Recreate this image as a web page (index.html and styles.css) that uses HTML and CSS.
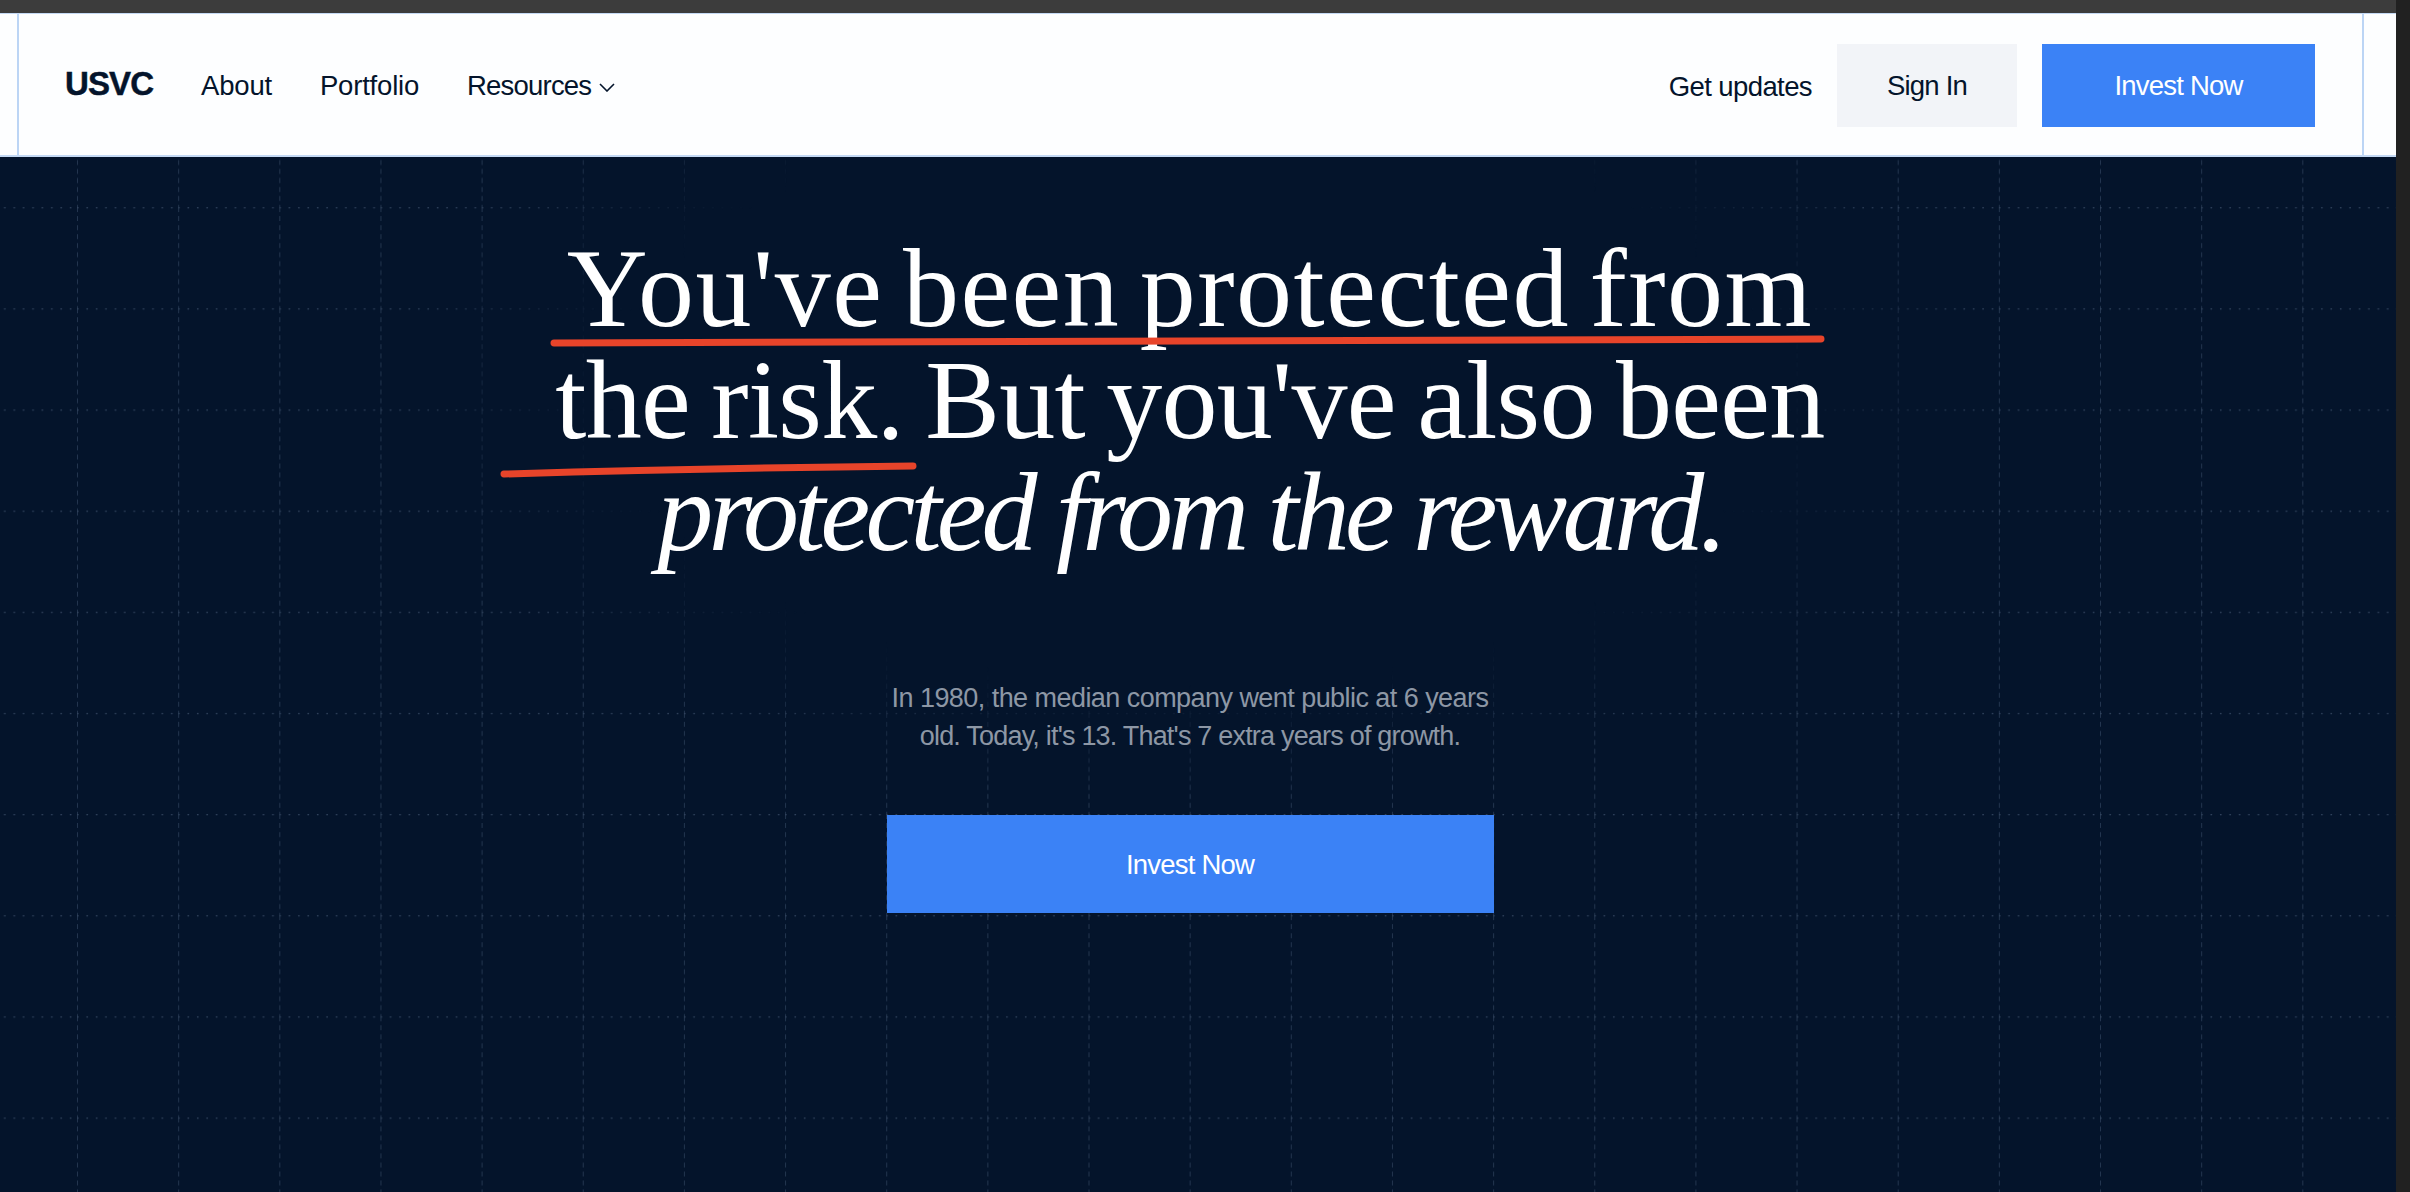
FILE: index.html
```html
<!DOCTYPE html>
<html lang="en">
<head>
<meta charset="utf-8">
<title>USVC</title>
<link rel="stylesheet" href="styles.css">
</head>
<body>
<div class="window">
  <div class="topbar"></div>
  <header class="navband">
    <nav class="nav">
      <div class="nav-left">
        <a class="logo">USVC</a>
        <a class="link">About</a>
        <a class="link">Portfolio</a>
        <a class="link link-menu">Resources
          <svg class="chev" viewBox="0 0 16 9" width="16" height="9"><path d="M1 1l7 7 7-7" fill="none" stroke="#04142b" stroke-width="1.6"/></svg>
        </a>
      </div>
      <div class="nav-right">
        <a class="link updates">Get updates</a>
        <a class="btn btn-sign">Sign In</a>
        <a class="btn btn-invest">Invest Now</a>
      </div>
    </nav>
  </header>
  <main class="hero">
    <svg class="grid" width="100%" height="100%">
      <defs>
        <pattern id="cell" x="-24.15" y="-51" width="101.15" height="101.15" patternUnits="userSpaceOnUse">
          <line x1="0.5" y1="0" x2="0.5" y2="101.15" stroke="#23354f" stroke-width="1" stroke-dasharray="5 4"/>
          <line x1="0" y1="0.5" x2="101.15" y2="0.5" stroke="#33455f" stroke-width="1.4" stroke-dasharray="1.6 7.8"/>
        </pattern>
      </defs>
      <rect width="100%" height="100%" fill="url(#cell)"/>
    </svg>
    <div class="hero-inner">
      <h1 class="headline"><span class="line line-a">You've been protected from</span><span class="line line-b">the risk. But you've also been</span><em class="line line-c">protected from the reward.</em></h1>
      <p class="lede">In 1980, the median company went public at 6 years<br><span class="lede-tight">old. Today, it's 13. That's 7 extra years of growth.</span></p>
      <a class="btn btn-invest btn-hero">Invest Now</a>
    </div>
    <svg class="marks" width="2396" height="1035" viewBox="0 0 2396 1035">
      <path d="M554 186 Q1200 184 1821 182" fill="none" stroke="#e8442a" stroke-width="7" stroke-linecap="round"/>
      <path d="M504 317 Q720 311 913 309" fill="none" stroke="#e8442a" stroke-width="7" stroke-linecap="round"/>
    </svg>
  </main>
</div>
</body>
</html>
```
FILE: styles.css
```css
* { box-sizing: border-box; }
html, body { margin: 0; height: 100%; }
body {
  background: #212121;
  overflow: hidden;
  font-family: "Liberation Sans", Arial, sans-serif;
}
.window {
  width: 2396px;
  height: 1192px;
  display: flex;
  flex-direction: column;
  background: #04142b;
}
.topbar { height: 13px; background: #3c3c3c; flex: none; }
.navband {
  flex: none;
  height: 144px;
  background: #fdfeff;
  padding: 0 32px 0 17px;
  border-top: 1px solid #c4d9f4;
  border-bottom: 2px solid #c4d9f4;
}
.nav {
  height: 100%;
  display: flex;
  justify-content: space-between;
  align-items: center;
  padding: 0 47px 0 46px;
  border-left: 2px solid #bcd5f5;
  border-right: 2px solid #bcd5f5;
}
.nav-left, .nav-right { display: flex; align-items: center; }
.nav-left { gap: 48px; }
.nav-right { gap: 25px; }
.logo {
  font-size: 33px;
  font-weight: 700;
  letter-spacing: -0.9px;
  margin-bottom: 2px;
  color: #04142b;
  -webkit-text-stroke: 0.5px #04142b;
}
.link {
  font-size: 27.5px;
  letter-spacing: -0.2px;
  margin-top: 2px;
  color: #04142b;
}
.link-menu { display: flex; align-items: center; gap: 8px; letter-spacing: -0.8px; }
.chev { margin-top: 4px; }
.updates { margin-top: 5px; letter-spacing: -0.6px; }
.btn {
  display: flex;
  align-items: center;
  justify-content: center;
  height: 83px;
  margin-top: 1px;
  padding-top: 1px;
  font-size: 27.5px;
  letter-spacing: -0.8px;
}
.btn-sign { width: 180px; background: #f2f4f8; color: #04142b; }
.btn-invest { width: 273px; background: #3b82f6; color: #fff; }
.hero {
  flex: 1;
  position: relative;
  overflow: hidden;
}
.grid {
  position: absolute;
  inset: 0;
  -webkit-mask-image: radial-gradient(ellipse 800px 400px at 1190px 240px, transparent 72%, #000 100%);
  mask-image: radial-gradient(ellipse 800px 400px at 1190px 240px, transparent 72%, #000 100%);
}
.hero-inner {
  position: relative;
  width: 2346px;
  margin-left: 17px;
  display: flex;
  flex-direction: column;
  align-items: center;
  padding-top: 75px;
}
.headline {
  margin: 0;
  font-family: "Liberation Serif", "Times New Roman", serif;
  font-weight: 400;
  font-size: 112px;
  line-height: 112px;
  color: #fff;
  text-align: center;
  white-space: nowrap;
}
.line { display: block; }
.line-a { letter-spacing: 1.5px; word-spacing: -10px; }
.line-b { letter-spacing: -0.7px; word-spacing: -6px; }
.line-c { font-style: italic; letter-spacing: -4.8px; }
.lede {
  margin: 112px 0 0;
  font-size: 27px;
  line-height: 37.5px;
  letter-spacing: -0.55px;
  color: #8d97a5;
  text-align: center;
}
.lede-tight { letter-spacing: -0.8px; }
.btn-hero { width: 607px; height: 98px; margin-top: 60px; }
.marks { position: absolute; left: 0; top: 0; pointer-events: none; }
```
